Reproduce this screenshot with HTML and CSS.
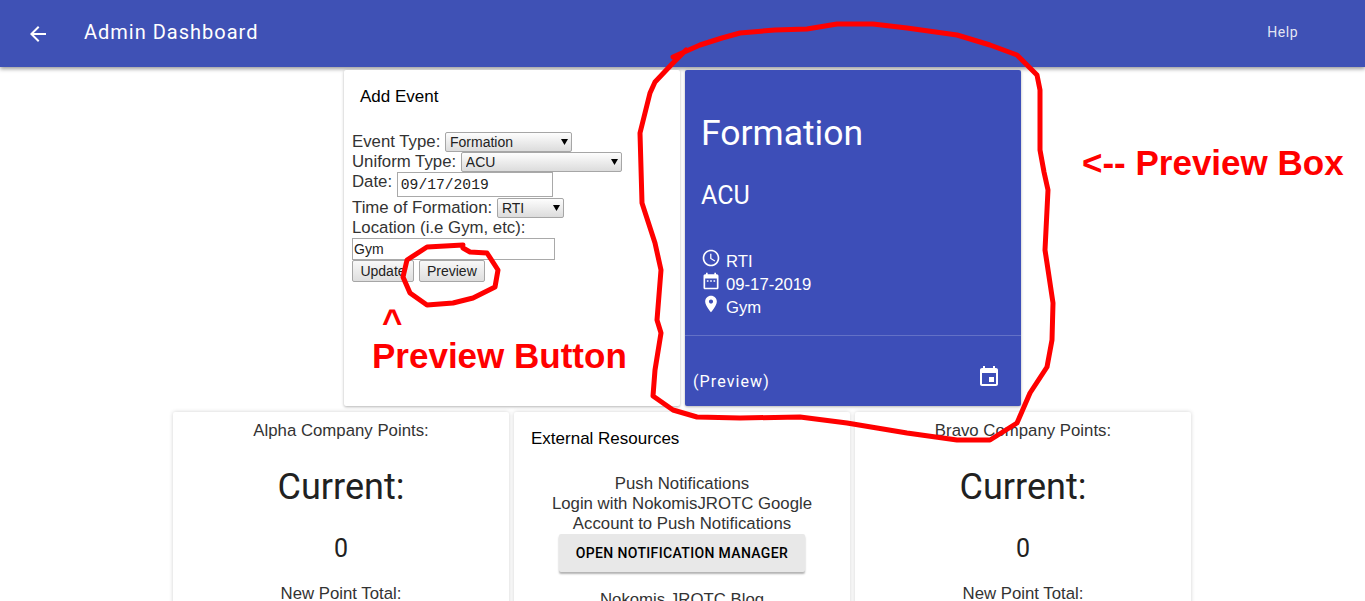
FILE: index.html
```html
<!DOCTYPE html>
<html lang="en">
<head>
    <meta charset="UTF-8">
    <meta name="viewport" content="width=device-width, initial-scale=1.0">
    <title>Admin Dashboard</title>
    <link rel="stylesheet" href="styles.css">
</head>
<body>

    <header class="topbar">
        <a class="back-btn" href="#">
            <svg viewBox="0 0 24 24" width="24" height="24"><path d="M20 11H7.83l5.59-5.59L12 4l-8 8 8 8 1.41-1.41L7.83 13H20v-2z"/></svg>
        </a>
        <h1 class="topbar-title">Admin Dashboard</h1>
        <a class="help-link" href="#">Help</a>
    </header>

    <main class="dashboard">
        <section class="card-row">
            <div class="card form-card">
                <h2 class="card-title">Add Event</h2>
                <form class="event-form">
                    <label for="type">Event Type:</label>
                    <select id="type" class="type-select"><option>Formation</option></select>
                    <br>
                    <label for="uniform">Uniform Type:</label>
                    <select id="uniform" class="uniform-select"><option>ACU</option></select>
                    <br>
                    <label for="date">Date:</label>
                    <input type="text" id="date" class="date-input" value="09/17/2019">
                    <br>
                    <label for="time">Time of Formation:</label>
                    <select id="time" class="time-select"><option>RTI</option></select>
                    <br>
                    <label for="location">Location (i.e Gym, etc):</label>
                    <br>
                    <input type="text" id="location" class="location-input" value="Gym">
                    <br>
                    <button type="button" class="update-btn">Update</button>
                    <button type="button">Preview</button>
                </form>
            </div>

            <div class="card preview-card">
                <div class="preview-main">
                    <div class="preview-type">Formation</div>
                    <div class="preview-uniform">ACU</div>
                    <ul class="preview-details">
                        <li>
                            <svg viewBox="0 0 24 24" width="20" height="20"><path d="M11.99 2C6.47 2 2 6.48 2 12s4.47 10 9.99 10C17.52 22 22 17.52 22 12S17.52 2 11.99 2zM12 20c-4.42 0-8-3.58-8-8s3.58-8 8-8 8 3.58 8 8-3.58 8-8 8zm.5-13H11v6l5.25 3.15.75-1.23-4.5-2.67z"/></svg>
                            RTI
                        </li>
                        <li>
                            <svg viewBox="0 0 24 24" width="20" height="20"><path d="M9 11H7v2h2v-2zm4 0h-2v2h2v-2zm4 0h-2v2h2v-2zm2-7h-1V2h-2v2H8V2H6v2H5c-1.11 0-1.99.9-1.99 2L3 20c0 1.1.89 2 2 2h14c1.1 0 2-.9 2-2V6c0-1.1-.9-2-2-2zm0 16H5V9h14v11z"/></svg>
                            09-17-2019
                        </li>
                        <li>
                            <svg viewBox="0 0 24 24" width="20" height="20"><path d="M12 2C8.13 2 5 5.13 5 9c0 5.25 7 13 7 13s7-7.75 7-13c0-3.87-3.13-7-7-7zm0 9.5c-1.38 0-2.5-1.12-2.5-2.5s1.12-2.5 2.5-2.5 2.5 1.12 2.5 2.5-1.12 2.5-2.5 2.5z"/></svg>
                            Gym
                        </li>
                    </ul>
                </div>
                <div class="preview-footer">
                    <span class="preview-note">(Preview)</span>
                    <svg viewBox="0 0 24 24" width="24" height="24"><path d="M17 12h-5v5h5v-5zM16 1v2H8V1H6v2H5c-1.11 0-1.99.9-1.99 2L3 19c0 1.1.89 2 2 2h14c1.1 0 2-.9 2-2V5c0-1.1-.9-2-2-2h-1V1h-2zm3 18H5V8h14v11z"/></svg>
                </div>
            </div>
        </section>

        <section class="card-row lower-row">
            <div class="card points-card">
                <p class="points-label">Alpha Company Points:</p>
                <div class="points-heading">Current:</div>
                <div class="points-value">0</div>
                <p class="points-label">New Point Total:</p>
            </div>

            <div class="card resources-card">
                <h2 class="card-title">External Resources</h2>
                <div class="resources-body">
                    <p>Push Notifications<br>Login with NokomisJROTC Google<br>Account to Push Notifications</p>
                    <button type="button" class="raised-btn">Open Notification Manager</button>
                    <p class="resources-next">Nokomis JROTC Blog</p>
                </div>
            </div>

            <div class="card points-card">
                <p class="points-label">Bravo Company Points:</p>
                <div class="points-heading">Current:</div>
                <div class="points-value">0</div>
                <p class="points-label">New Point Total:</p>
            </div>
        </section>
    </main>

    <!-- hand drawn markup on top of the page -->
    <svg class="markup" viewBox="0 0 1365 601" width="1365" height="601">
        <path d="M673 57 L700 45 L722 38 L740 33 L775 30 L807 29 L837 24 L873 24 L907 28 L957 35 L990 45 L1017 55 L1030 68 L1037 75 L1040 90 L1040 150 L1044 172 L1048 190 L1045 250 L1047 263 L1053 303 L1052 340 L1047 367 L1030 393 L1017 423 L990 440 L957 440 L907 433 L847 423 L800 417 L740 418 L697 417 L673 410 L653 396 L655 370 L661 333 L657 320 L661 270 L655 243 L642 203 L640 133 L650 93 L655 82 L673 63 L686 50"/>
        <path d="M463 248 L470 252 L487 253 L498 270 L495 287 L473 298 L453 303 L427 305 L410 293 L403 277 L407 260 L427 247 L463 245"/>
    </svg>
    <div class="markup-text caret">^</div>
    <div class="markup-text button-note">Preview Button</div>
    <div class="markup-text box-note">&lt;-- Preview Box</div>

</body>
</html>
```

FILE: styles.css
```css
* {
    margin: 0;
    padding: 0;
    box-sizing: border-box;
}

html, body {
    height: 601px;
    overflow: hidden;
}

body {
    position: relative;
    font-family: 'Liberation Sans', Arial, sans-serif;
    background: #fff;
    color: #333;
}

.topbar {
    display: flex;
    align-items: center;
    height: 67px;
    padding: 0 67px 3px 26px;
    background-color: #3f51b5;
    color: #fff;
    box-shadow: 0 2px 4px rgba(0, 0, 0, 0.4);
}

.back-btn {
    display: flex;
    fill: #fff;
    margin-top: 3px;
}

.topbar-title {
    flex: 1;
    margin-left: 34px;
    font-family: Roboto, sans-serif;
    font-size: 20px;
    font-weight: 400;
    letter-spacing: 1px;
}

.help-link {
    font-family: Roboto, sans-serif;
    font-size: 14px;
    letter-spacing: 0.5px;
    color: rgba(255, 255, 255, 0.87);
    text-decoration: none;
}

.dashboard {
    display: flex;
    flex-direction: column;
    gap: 6px;
    padding-top: 3px;
}

.card-row {
    display: flex;
    justify-content: center;
    gap: 5px;
}

.lower-row {
    padding-right: 1px;
}

.card {
    width: 336px;
    height: 336px;
    background-color: #fff;
    border-radius: 2px;
    box-shadow: 0 1px 3px rgba(0, 0, 0, 0.3);
}

.lower-row .card {
    height: 400px;
    box-shadow: 0 0 4px rgba(0, 0, 0, 0.18);
}

.card-title {
    font-size: 17px;
    font-weight: 400;
    color: #000;
}

/* add event form */
.form-card {
    padding: 17px 8px;
}

.form-card .card-title {
    margin: 0 8px 25px;
}

.event-form {
    font-size: 16.8px;
    line-height: 20px;
}

select {
    appearance: none;
    height: 20px;
    padding: 0 4px;
    border: 1px solid #a6a6a6;
    border-radius: 2px;
    font-family: 'Liberation Sans', Arial, sans-serif;
    font-size: 14px;
    color: #222;
    background: url("data:image/svg+xml,%3Csvg xmlns='http://www.w3.org/2000/svg' width='7' height='6'%3E%3Cpath d='M0 0h7L3.5 6z'/%3E%3C/svg%3E") no-repeat right 3px center,
        linear-gradient(#fdfdfd, #dcdcdc);
    vertical-align: top;
}

.type-select {
    width: 127px;
}

.uniform-select {
    width: 161px;
}

.time-select {
    width: 67px;
}

input {
    border: 1px solid #a9a9a9;
    color: #222;
    vertical-align: top;
}

.date-input {
    width: 156px;
    height: 25px;
    margin-bottom: 1px;
    padding: 0 3px;
    font-family: 'Liberation Mono', monospace;
    font-size: 14.67px;
}

.location-input {
    width: 203px;
    height: 22px;
    padding: 0 1px;
    font-family: 'Liberation Sans', Arial, sans-serif;
    font-size: 14px;
}

.event-form button {
    height: 22px;
    padding: 0 7px;
    border: 1px solid #a6a6a6;
    border-radius: 2px;
    background: linear-gradient(#f8f8f8, #dedede);
    font-family: 'Liberation Sans', Arial, sans-serif;
    font-size: 14px;
    color: #222;
    vertical-align: top;
}

.event-form .update-btn {
    width: 62px;
    margin-right: 0.3px;
}

/* preview box */
.preview-card {
    display: flex;
    flex-direction: column;
    background-color: #3d4eb8;
    color: #fff;
    fill: #fff;
}

.preview-main {
    height: 266px;
    padding: 40px 16px 0;
    border-bottom: 1px solid rgba(255, 255, 255, 0.2);
}

.preview-type {
    font-family: Roboto, sans-serif;
    font-size: 35.5px;
    line-height: 46px;
}

.preview-uniform {
    margin-top: 26px;
    font-family: Roboto, sans-serif;
    font-size: 25px;
    line-height: 28px;
}

.preview-details {
    margin-top: 40px;
    list-style: none;
    font-size: 16.7px;
    line-height: 23px;
}

.preview-details li {
    display: flex;
    align-items: center;
    gap: 5px;
}

.preview-details svg {
    margin-top: -7px;
}

.preview-footer {
    display: flex;
    justify-content: space-between;
    align-items: center;
    flex: 1;
    padding: 20px 20px 0 8px;
}

.preview-note {
    font-family: Roboto, sans-serif;
    font-size: 16px;
    letter-spacing: 1.1px;
}

.preview-footer svg {
    margin-top: -8px;
}

/* bottom row */
.points-card {
    padding-top: 9px;
    text-align: center;
}

.points-label {
    font-size: 16.8px;
    line-height: 20px;
}

.points-heading {
    margin-top: 24px;
    font-family: Roboto, sans-serif;
    font-size: 36px;
    line-height: 44px;
    color: #212121;
}

.points-value {
    margin: 25px 0 20px;
    font-family: Roboto, sans-serif;
    font-size: 25px;
    line-height: 30px;
    color: #212121;
}

.resources-card {
    padding: 17px;
}

.resources-body {
    margin-top: 25px;
    text-align: center;
    font-size: 16.8px;
    line-height: 20px;
}

.raised-btn {
    width: 246px;
    height: 38px;
    border: none;
    border-radius: 2px;
    background-color: #e8e8e8;
    box-shadow: 0 2px 2px rgba(0, 0, 0, 0.3);
    font-family: Roboto, sans-serif;
    font-size: 14px;
    font-weight: 500;
    letter-spacing: 0.35px;
    text-transform: uppercase;
    color: #000;
}

.resources-next {
    margin-top: 18px;
}

/* red markup */
.markup {
    position: absolute;
    top: 0;
    left: 0;
    fill: none;
    stroke: #f00;
    stroke-width: 5;
    stroke-linejoin: round;
    stroke-linecap: round;
    pointer-events: none;
}

.markup-text {
    position: absolute;
    font-size: 35px;
    font-weight: bold;
    color: #f00;
    white-space: nowrap;
}

.caret {
    top: 309px;
    left: 382px;
    line-height: 26px;
}

.button-note {
    top: 338px;
    left: 372px;
    line-height: 36px;
}

.box-note {
    top: 145px;
    left: 1082px;
    line-height: 36px;
}
```
